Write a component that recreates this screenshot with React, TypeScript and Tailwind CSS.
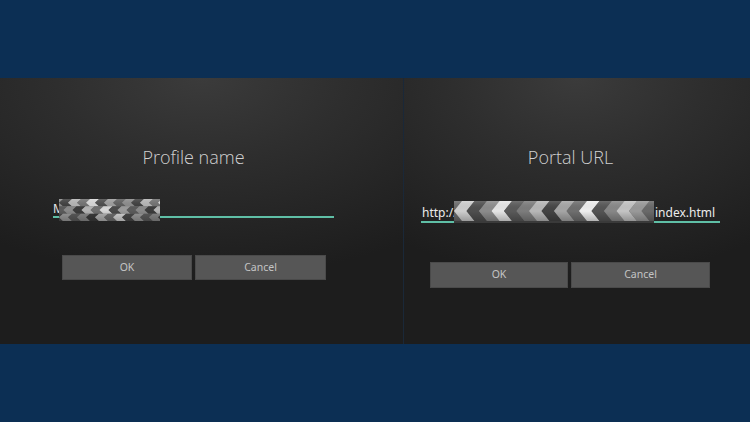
import React from "react";

type ChevProps = { w: number; h: number; step: number; rows: number; depth: number; colors: string[] };

function Chevrons({ w, h, step, rows, depth, colors }: ChevProps) {
  const polys: React.ReactElement[] = [];
  const rh = h / rows;
  let k = 0;
  for (let r = 0; r < rows; r++) {
    const y0 = r * rh;
    const y1 = y0 + rh;
    const mid = y0 + rh / 2;
    for (let x = -step * 2 + (r % 2) * (step / 2); x < w + step; x += step) {
      const pts = [
        [x + depth, y0],
        [x + depth + step, y0],
        [x + step, mid],
        [x + depth + step, y1],
        [x + depth, y1],
        [x, mid],
      ]
        .map((p) => p.join(","))
        .join(" ");
      polys.push(<polygon key={`${r}-${k}`} points={pts} fill={colors[k % colors.length]} />);
      k++;
    }
  }
  return (
    <svg width={w} height={h} viewBox={`0 0 ${w} ${h}`} className="block">
      <defs>
        <linearGradient id={`shade${w}`} x1="0" y1="0" x2="0" y2="1">
          <stop offset="0" stopColor="#ffffff" stopOpacity="0.15" />
          <stop offset="0.5" stopColor="#000000" stopOpacity="0" />
          <stop offset="1" stopColor="#000000" stopOpacity="0.25" />
        </linearGradient>
      </defs>
      <rect width={w} height={h} fill="#777" />
      {polys}
      <rect width={w} height={h} fill={`url(#shade${w})`} />
    </svg>
  );
}

function Btn({ label, w, h }: { label: string; w: number; h: number }) {
  return (
    <div
      className="flex items-center justify-center bg-[#565656] border border-[#4a4a4a] text-[#c4c4c4] text-[10.5px]"
      style={{ width: w, height: h, fontFamily: '"Noto Sans", "Open Sans", sans-serif' }}
    >
      {label}
    </div>
  );
}

const panelBg =
  "bg-[radial-gradient(ellipse_90%_75%_at_50%_0%,#3b3b3b_0%,#2e2e2e_40%,#1d1d1d_100%)]";

const titleCls = "text-center text-[18px] leading-[24px] text-[#d0d0d0]";
const titleFont = { fontFamily: '"Open Sans", "Noto Sans", sans-serif', fontWeight: 300 };

export default function App() {
  return (
    <div
      className="w-[750px] h-[422px] bg-[#0c2f54] flex flex-col overflow-hidden"
      style={{ fontFamily: '"Noto Sans", "Open Sans", sans-serif' }}
    >
      <div className="h-[78px] shrink-0" />
      <div className="h-[266px] flex shrink-0">
        {/* Left panel */}
        <div className={`w-[403px] h-full flex flex-col ${panelBg}`}>
          <div className={`mt-[67px] ml-[53px] w-[281px] ${titleCls}`} style={titleFont}>
            Profile name
          </div>
          <div className="ml-[53px] w-[281px] mt-[30px] relative h-[22px]">
            <div className="absolute left-0 top-[3px] text-[12px] leading-[14px] text-[#e8e8e8]">M</div>
            <div className="absolute left-0 right-0 top-[17px] h-[1.5px] bg-[#5fbfa6]" />
            <div className="absolute left-[6px] top-0">
              <Chevrons
                w={101}
                h={22}
                step={9}
                rows={3}
                depth={4}
                colors={["#5c5c5c", "#8a8a8a", "#3c3c3c", "#b5b5b5", "#707070", "#d8d8d8", "#4a4a4a", "#9c9c9c"]}
              />
            </div>
          </div>
          <div className="ml-[62px] mt-[34px] flex gap-[3px]">
            <Btn label="OK" w={130} h={25} />
            <Btn label="Cancel" w={131} h={25} />
          </div>
        </div>
        <div className="w-[1px] h-full bg-[#1a2838]" />
        {/* Right panel */}
        <div className={`flex-1 h-full flex flex-col ${panelBg}`}>
          <div className={`mt-[67px] ml-[17px] w-[299px] ${titleCls}`} style={titleFont}>
            Portal URL
          </div>
          <div className="ml-[17px] w-[299px] mt-[31px] relative h-[23px]">
            <div className="absolute left-[1px] top-[5px] text-[12px] leading-[15px] text-[#ececec]">http://</div>
            <div className="absolute left-[33px] top-[1px]">
              <Chevrons
                w={200}
                h={20}
                step={12.5}
                rows={1}
                depth={8}
                colors={["#9a9a9a", "#6a6a6a", "#cfcfcf", "#4f4f4f", "#8c8c8c", "#e6e6e6", "#5a5a5a", "#7d7d7d", "#b8b8b8", "#444444", "#a6a6a6", "#6f6f6f", "#efefef", "#555555", "#888888", "#c4c4c4"]}
              />
            </div>
            <div className="absolute left-[234px] top-[5px] text-[12px] leading-[15px] text-[#ececec] z-10">index.html</div>
            <div className="absolute left-0 right-0 top-[21px] h-[1.5px] bg-[#5fbfa6]" />
            <div className="absolute left-[33px] w-[200px] top-[21px] h-[1.5px] bg-[#3a3a3a]" />
          </div>
          <div className="ml-[26px] mt-[39px] flex gap-[3px]">
            <Btn label="OK" w={138} h={26} />
            <Btn label="Cancel" w={139} h={26} />
          </div>
        </div>
      </div>
      <div className="flex-1" />
    </div>
  );
}
